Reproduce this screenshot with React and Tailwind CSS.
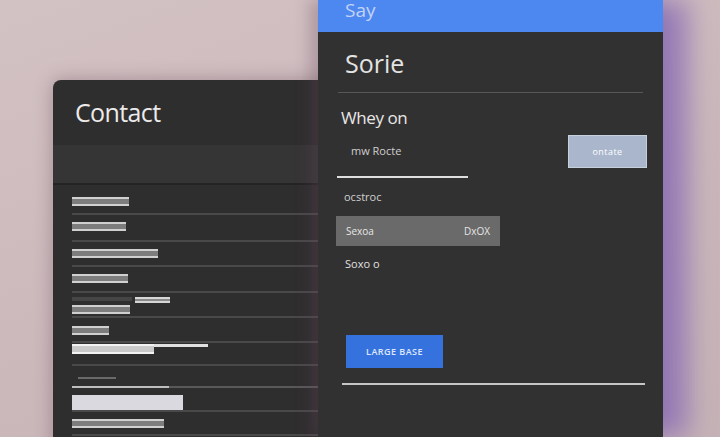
const rows = [
  { h: 30, bars: [{ w: 57, mt: 12 }] },
  { h: 27, bars: [{ w: 54, mt: 7 }] },
  { h: 25, bars: [{ w: 86, mt: 7 }] },
  { h: 26, bars: [{ w: 56, mt: 7 }] },
  { h: 25, extra: true },
  { h: 25, bars: [{ w: 37, mt: 8 }] },
  { h: 23, bright: true },
  { h: 22, thin: true },
  { h: 24, box: true },
  { h: 24, bars: [{ w: 92, mt: 7 }] },
];

const Bar = ({ w, mt = 0, ml = 0 }) => (
  <div
    className="h-[9px] border-y-2 border-[#d0d0d0] bg-[#7d7d7d]"
    style={{ width: w, marginTop: mt, marginLeft: ml }}
  />
);

const ContactPanel = () => (
  <div className="absolute left-[53px] top-[80px] w-[300px] h-[400px] rounded-tl-lg bg-[#2f2e2e] shadow-[0_0_18px_rgba(80,50,60,0.35)] overflow-hidden">
    <div className="h-[65px] flex items-center pl-[22px]">
      <h1 className="text-[25px] text-[#ecebeb] font-['Open_Sans',sans-serif] tracking-tight">
        Contact
      </h1>
    </div>
    <div className="h-[40px] bg-[#363535] border-b-2 border-[#242424]" />
    <div className="pl-[19px]">
      {rows.map((r, i) => (
        <div
          key={i}
          className={`flow-root border-b-2 ${i === 7 ? "border-[#5a5959]" : "border-[#4a4949]"}`}
          style={{ height: r.h }}
        >
          {r.bars && r.bars.map((b, j) => <Bar key={j} {...b} />)}
          {r.extra && (
            <div>
              <div className="flex items-start mt-[4px]">
                <div className="h-[4px] w-[60px] bg-[#454545]" />
                <div className="h-[6px] w-[35px] ml-[3px] border-y-2 border-[#d6d6d6] bg-[#8a8a8a]" />
              </div>
              <Bar w={58} mt={2} />
            </div>
          )}
          {r.bright && (
            <div className="flex items-start mt-[1px]">
              <div className="h-[10px] w-[82px] border-y-2 border-[#f2f2f2] bg-[#c9c9c9]" />
              <div className="h-[3px] w-[54px] bg-[#e0e0e0]" />
            </div>
          )}
          {r.thin && (
            <div className="flex flex-col justify-between h-full">
              <div className="h-[2px] w-[38px] ml-[6px] mt-[11px] bg-[#6a6a6a]" />
              <div className="h-[2px] w-[97px] bg-[#bdbdbd] -mb-[2px]" />
            </div>
          )}
          {r.box && <div className="h-[15px] w-[111px] mt-[7px] bg-[#d9d9df]" />}
        </div>
      ))}
    </div>
  </div>
);

const SettingsPanel = () => (
  <div className="absolute left-[318px] top-0 w-[345px] h-[437px] bg-[#323131] shadow-[-8px_0_14px_rgba(100,70,85,0.3),24px_0_26px_rgba(135,105,180,0.8)] font-['Open_Sans',sans-serif]">
    <div className="h-[32px] bg-[#4d87f0] pl-[27px]">
      <div className="text-[19px] leading-[20px] text-[#c2d3f5]">Say</div>
    </div>
    <div className="px-[20px]">
      <div className="h-[60px] flex items-center pl-[7px] pt-[4px]">
        <h2 className="text-[25px] text-[#e4e3e3]">Sorie</h2>
      </div>
      <div className="h-[1px] bg-[#575757]" />
      <div className="pl-[3px] pt-[14px] text-[17px] text-[#e8e7e7] leading-[22px] tracking-tight">
        Whey on
      </div>
      <div className="flex justify-between items-start mt-[6px]">
        <div className="w-[131px] -ml-[1px]">
          <div className="pl-[14px] pt-[9px] text-[11px] text-[#cfcfcf] leading-[14px]">mw Rocte</div>
          <div className="h-[2px] bg-[#dedede] mt-[18px]" />
        </div>
        <div className="w-[79px] h-[33px] -mr-[4px] bg-[#a9b6cc] border border-[#c7cfdc] flex items-center justify-center text-[9px] text-white tracking-wider">
          ontate
        </div>
      </div>
      <div className="pl-[6px] mt-[12px] text-[11px] text-[#d0d0d0] leading-[14px]">ocstroc</div>
      <div className="mt-[12px] -ml-[2px] w-[164px] h-[30px] bg-[#6a6a6a] flex items-center justify-between px-[10px] text-[10px] text-[#e6e6e6]">
        <span>Sexoa</span>
        <span>DxOX</span>
      </div>
      <div className="pl-[7px] mt-[11px] text-[11px] text-[#e0e0e0] leading-[14px]">Soxo o</div>
      <div className="h-[64px]" />
      <div className="ml-[8px] w-[97px] h-[33px] bg-[#3672de] flex items-center justify-center text-[9px] text-[#dfe8fb] tracking-wider font-semibold">
        LARGE BASE
      </div>
      <div className="mt-[15px] ml-[4px] mr-[-2px] h-[2px] bg-[#c6c6c6]" />
    </div>
  </div>
);

export default function App() {
  return (
    <div className="relative w-[720px] h-[437px] overflow-hidden bg-[linear-gradient(160deg,#d3c2c4_0%,#cbb8bb_55%,#c6b3b6_100%)]">
      <ContactPanel />
      <SettingsPanel />
    </div>
  );
}
